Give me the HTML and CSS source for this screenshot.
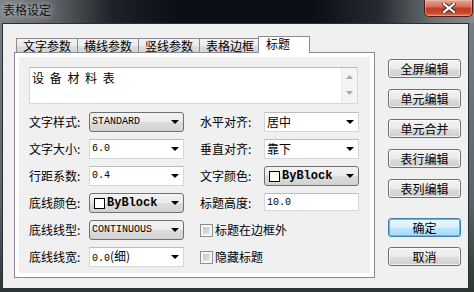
FILE: index.html
```html
<!DOCTYPE html>
<html lang="zh-CN">
<head>
    <meta charset="UTF-8">
    <title>表格设定</title>
    <link rel="stylesheet" href="styles.css">
</head>
<body>
    <div class="window">
        <div class="titlebar">
            <span class="title">表格设定</span>
            <div class="close">
                <svg width="14" height="10" viewBox="0 0 14 10">
                    <path d="M2 1 L12 9 M12 1 L2 9" stroke="#3a2a28" stroke-width="4" stroke-linecap="square"/>
                    <path d="M2 1 L12 9 M12 1 L2 9" stroke="#ffffff" stroke-width="2.2" stroke-linecap="square"/>
                </svg>
            </div>
        </div>

        <div class="client">
            <div class="main">
                <div class="tabs">
                    <div class="tab">文字参数</div>
                    <div class="tab">横线参数</div>
                    <div class="tab">竖线参数</div>
                    <div class="tab">表格边框</div>
                    <div class="tab active">标题</div>
                </div>

                <div class="panel">
                    <div class="pane">
                        <div class="memo">
                            <div class="memo-text">设 备 材 料 表</div>
                            <div class="memo-scroll">
                                <svg width="7" height="4" viewBox="0 0 7 4"><polygon points="0,4 7,4 3.5,0" fill="#a8a8a8"/></svg>
                                <svg width="7" height="4" viewBox="0 0 7 4"><polygon points="0,0 7,0 3.5,4" fill="#a8a8a8"/></svg>
                            </div>
                        </div>

                        <div class="fields">
                            <span class="label">文字样式:</span>
                            <div class="combo list"><span class="value mono">STANDARD</span><i class="arrow"></i></div>
                            <span></span>
                            <span class="label">水平对齐:</span>
                            <div class="combo edit"><span class="value">居中</span><i class="arrow"></i></div>

                            <span class="label">文字大小:</span>
                            <div class="combo edit"><span class="value mono">6.0</span><i class="arrow"></i></div>
                            <span></span>
                            <span class="label">垂直对齐:</span>
                            <div class="combo edit"><span class="value">靠下</span><i class="arrow"></i></div>

                            <span class="label">行距系数:</span>
                            <div class="combo edit"><span class="value mono">0.4</span><i class="arrow"></i></div>
                            <span></span>
                            <span class="label">文字颜色:</span>
                            <div class="combo list"><span class="swatch"></span><span class="value mono big">ByBlock</span><i class="arrow"></i></div>

                            <span class="label">底线颜色:</span>
                            <div class="combo list"><span class="swatch"></span><span class="value mono big">ByBlock</span><i class="arrow"></i></div>
                            <span></span>
                            <span class="label">标题高度:</span>
                            <div class="textbox"><span class="mono">10.0</span></div>

                            <span class="label">底线线型:</span>
                            <div class="combo list"><span class="value mono">CONTINUOUS</span><i class="arrow"></i></div>
                            <span></span>
                            <label class="check"><span class="box"></span>标题在边框外</label>

                            <span class="label">底线线宽:</span>
                            <div class="combo edit"><span class="value"><span class="mono">0.0</span>(细)</span><i class="arrow"></i></div>
                            <span></span>
                            <label class="check"><span class="box"></span>隐藏标题</label>
                        </div>
                    </div>
                </div>
            </div>

            <div class="actions">
                <button class="btn">全屏编辑</button>
                <button class="btn">单元编辑</button>
                <button class="btn">单元合并</button>
                <button class="btn">表行编辑</button>
                <button class="btn">表列编辑</button>
                <button class="btn default ok">确定</button>
                <button class="btn">取消</button>
            </div>
        </div>
    </div>
</body>
</html>
```

FILE: styles.css
```css
* {
    box-sizing: border-box;
}
body {
    margin: 0;
    font-family: "Noto Sans CJK SC", "Liberation Sans", sans-serif;
    font-size: 12px;
    color: #000;
    background: #1d2a24;
}
.window {
    width: 474px;
    height: 292px;
    display: flex;
    flex-direction: column;
    background: linear-gradient(180deg, #7b8084 0%, #5d6266 70%, #2b3530 100%);
}
.titlebar {
    height: 23px;
    display: flex;
    justify-content: space-between;
    align-items: flex-start;
    background: linear-gradient(90deg, #7c8185 0%, #5a5f63 12%, #1c2127 24%, #0a0e15 38%, #0a0e15 66%, #262b31 80%, #6d7276 92%, #868b8f 100%);
}
.title {
    margin: 3px 0 0 3px;
    line-height: 14px;
    color: #111;
    text-shadow: 0 0 6px #c8ccd0, 0 0 10px #b9bdc1;
}
.close {
    width: 49px;
    height: 17px;
    margin-right: 1px;
    display: flex;
    align-items: center;
    justify-content: center;
    border: 1px solid #4d1d14;
    border-top: none;
    border-radius: 0 0 5px 5px;
    background: linear-gradient(180deg, #e7a595 0%, #d7715c 40%, #c23b22 55%, #c8482c 80%, #dc7a50 100%);
    box-shadow: inset 0 0 0 1px rgba(255, 220, 200, 0.35);
}
.client {
    width: 467px;
    height: 266px;
    margin-left: 2px;
    padding: 12px 0 0 11px;
    display: flex;
    align-items: flex-start;
    background: #f0f0f0;
    border: 1px solid #2a2f33;
}

/* tabs */
.main {
    width: 361px;
    display: flex;
    flex-direction: column;
}
.tabs {
    height: 16px;
    display: flex;
    align-items: flex-end;
    padding-left: 2px;
}
.tab {
    height: 14px;
    padding: 0 6px;
    margin-right: -1px;
    line-height: 13px;
    border: 1px solid #898c95;
    border-bottom: none;
    background: linear-gradient(180deg, #f3f3f3 0%, #ebebeb 50%, #dddddd 51%, #d5d5d5 100%);
}
.tab.active {
    position: relative;
    z-index: 1;
    width: 52px;
    height: 17px;
    margin: 0 0 -1px -2px;
    padding: 0 7px;
    line-height: 14px;
    background: #fff;
}
.panel {
    height: 226px;
    padding: 4px;
    background: #fff;
    border: 1px solid #898c95;
}
.pane {
    height: 100%;
    padding: 10px 10px 0 10px;
    background: #f0f0f0;
}

/* memo box */
.memo {
    height: 37px;
    width: 329px;
    display: flex;
    background: #fff;
    border: 1px solid #d5d8dc;
    border-top-color: #b8bcc2;
}
.memo-text {
    flex: 1;
    padding: 3px 0 0 2px;
    line-height: 13px;
    word-spacing: 3px;
}
.memo-scroll {
    width: 16px;
    display: flex;
    flex-direction: column;
    justify-content: space-between;
    align-items: center;
    padding: 7px 0 8px;
    background: #f4f4f4;
    border-left: 1px solid #e8e8e8;
}

/* fields grid */
.fields {
    margin-top: 8px;
    display: grid;
    grid-template-columns: 60px 95px 16px 64px 95px;
    grid-auto-rows: 20px;
    row-gap: 7px;
    align-items: center;
}
.label {
    line-height: 14px;
}
.combo {
    height: 20px;
    display: flex;
    align-items: center;
    padding: 0 4px 0 2px;
    line-height: 14px;
}
.combo.list {
    border: 1px solid #707070;
    border-radius: 3px;
    background: linear-gradient(180deg, #f3f3f3 0%, #ebebeb 50%, #dddddd 51%, #d2d2d2 100%);
}
.combo.edit {
    background: #fff;
    border: 1px solid #d3d6da;
    border-top-color: #b9bdc3;
}
.combo .value {
    flex: 1;
}
.combo .swatch {
    flex: none;
    width: 11px;
    height: 11px;
    margin: 0 2px 0 2px;
    background: #fff;
    border: 1px solid #000;
}
.mono {
    font-family: "Liberation Mono", "DejaVu Sans Mono", monospace;
    font-size: 10px;
}
.mono.big {
    font-size: 12px;
    font-weight: bold;
}
.arrow {
    flex: none;
    width: 0;
    height: 0;
    border-left: 4px solid transparent;
    border-right: 4px solid transparent;
    border-top: 4px solid #000;
}
.textbox {
    height: 18px;
    align-self: start;
    display: flex;
    align-items: center;
    padding-left: 2px;
    background: #fff;
    border: 1px solid #d3d6da;
    border-top-color: #b9bdc3;
}
.check {
    grid-column: 4 / 6;
    display: flex;
    align-items: center;
    gap: 2px;
    line-height: 14px;
}
.box {
    width: 13px;
    height: 13px;
    border: 1px solid #8f8f8f;
    box-shadow: inset 0 0 0 2px #f6f6f6;
    background: linear-gradient(135deg, #b4b8bd 0%, #dadcdf 60%, #eeeeee 100%);
}

/* right column buttons */
.actions {
    width: 73px;
    margin-left: 13px;
    padding-top: 23px;
    display: flex;
    flex-direction: column;
    gap: 11px;
}
.btn {
    height: 19px;
    padding: 0;
    font-family: "Noto Sans CJK SC", sans-serif;
    font-size: 12px;
    line-height: 14px;
    color: #000;
    border: 1px solid #707070;
    border-radius: 3px;
    background: linear-gradient(180deg, #f3f3f3 0%, #ebebeb 50%, #dddddd 51%, #cfcfcf 100%);
    box-shadow: inset 0 0 0 1px rgba(255, 255, 255, 0.7);
}
.btn.ok {
    margin-top: 9px;
    margin-bottom: -1px;
}
.btn.default {
    border-color: #3c7fb1;
    background: linear-gradient(180deg, #eaf6fd 0%, #d9f0fc 50%, #bee6fd 51%, #a7d9f5 100%);
    box-shadow: inset 0 0 0 1px #48c3f3;
}
```
